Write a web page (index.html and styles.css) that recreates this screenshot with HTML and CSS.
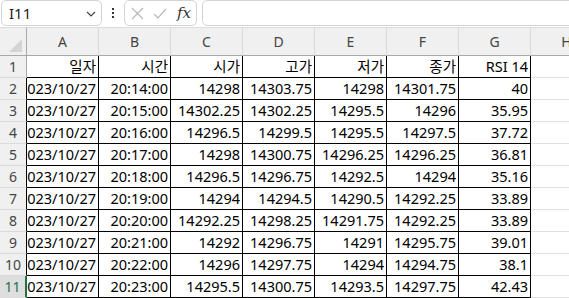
FILE: index.html
```html
<!DOCTYPE html>
<html lang="ko">
<head>
    <meta charset="UTF-8">
    <title>RSI 14</title>
    <link rel="stylesheet" href="styles.css">
</head>
<body>
    <!-- formula bar -->
    <div class="toolbar">
        <div class="namebox">
            <span>I11</span>
            <svg class="chevron" width="10" height="6" viewBox="0 0 10 6"><path d="M1 1l4 4 4-4" fill="none" stroke="#444" stroke-width="1.2"/></svg>
        </div>
        <div class="dots">
            <span></span><span></span><span></span>
        </div>
        <div class="fbuttons">
            <svg width="13" height="13" viewBox="0 0 13 13"><path d="M1 1l11 11M12 1L1 12" stroke="#b8b8b8" stroke-width="1.2"/></svg>
            <svg width="14" height="11" viewBox="0 0 14 11"><path d="M1 6l4 4 8-9" fill="none" stroke="#b8b8b8" stroke-width="1.2"/></svg>
            <span class="fx">fx</span>
        </div>
        <div class="formula"></div>
    </div>

    <div class="sheet">
        <div class="corner"><span class="tri"></span></div>
        <div class="col">A</div>
        <div class="col">B</div>
        <div class="col">C</div>
        <div class="col">D</div>
        <div class="col">E</div>
        <div class="col">F</div>
        <div class="col">G</div>
        <div class="col">H</div>

        <div class="row first">1</div>
        <div class="c">일자</div><div class="c">시간</div><div class="c">시가</div><div class="c">고가</div><div class="c">저가</div><div class="c">종가</div><div class="c">RSI 14</div><div class="e"></div>

        <div class="row">2</div>
        <div class="c">2023/10/27</div><div class="c">20:14:00</div><div class="c">14298</div><div class="c">14303.75</div><div class="c">14298</div><div class="c">14301.75</div><div class="c">40</div><div class="e"></div>

        <div class="row">3</div>
        <div class="c">2023/10/27</div><div class="c">20:15:00</div><div class="c">14302.25</div><div class="c">14302.25</div><div class="c">14295.5</div><div class="c">14296</div><div class="c">35.95</div><div class="e"></div>

        <div class="row">4</div>
        <div class="c">2023/10/27</div><div class="c">20:16:00</div><div class="c">14296.5</div><div class="c">14299.5</div><div class="c">14295.5</div><div class="c">14297.5</div><div class="c">37.72</div><div class="e"></div>

        <div class="row">5</div>
        <div class="c">2023/10/27</div><div class="c">20:17:00</div><div class="c">14298</div><div class="c">14300.75</div><div class="c">14296.25</div><div class="c">14296.25</div><div class="c">36.81</div><div class="e"></div>

        <div class="row">6</div>
        <div class="c">2023/10/27</div><div class="c">20:18:00</div><div class="c">14296.5</div><div class="c">14296.75</div><div class="c">14292.5</div><div class="c">14294</div><div class="c">35.16</div><div class="e"></div>

        <div class="row">7</div>
        <div class="c">2023/10/27</div><div class="c">20:19:00</div><div class="c">14294</div><div class="c">14294.5</div><div class="c">14290.5</div><div class="c">14292.25</div><div class="c">33.89</div><div class="e"></div>

        <div class="row">8</div>
        <div class="c">2023/10/27</div><div class="c">20:20:00</div><div class="c">14292.25</div><div class="c">14298.25</div><div class="c">14291.75</div><div class="c">14292.25</div><div class="c">33.89</div><div class="e"></div>

        <div class="row">9</div>
        <div class="c">2023/10/27</div><div class="c">20:21:00</div><div class="c">14292</div><div class="c">14296.75</div><div class="c">14291</div><div class="c">14295.75</div><div class="c">39.01</div><div class="e"></div>

        <div class="row">10</div>
        <div class="c">2023/10/27</div><div class="c">20:22:00</div><div class="c">14296</div><div class="c">14297.75</div><div class="c">14294</div><div class="c">14294.75</div><div class="c">38.1</div><div class="e"></div>

        <div class="row active">11</div>
        <div class="c">2023/10/27</div><div class="c">20:23:00</div><div class="c">14295.5</div><div class="c">14300.75</div><div class="c">14293.5</div><div class="c">14297.75</div><div class="c">42.43</div><div class="e"></div>
    </div>
</body>
</html>
```
FILE: styles.css
```css
/* Excel-like sheet */
body {
    margin: 0;
    background-color: #fff;
    font-family: 'Noto Sans', 'Noto Sans CJK KR', sans-serif;
    color: #000;
    overflow: hidden;
    width: 569px;
    height: 298px;
}

.toolbar {
    display: flex;
    align-items: stretch;
    height: 27px;
    box-sizing: border-box;
    padding: 0 0 1px 1px;
    background-color: #fff;
}

.namebox {
    width: 101px;
    box-sizing: border-box;
    border: 1px solid #d4d4d4;
    border-radius: 5px;
    display: flex;
    align-items: center;
    justify-content: space-between;
    padding: 0 5px 0 7px;
    font-size: 15px;
    color: #222;
}

.chevron {
    margin-top: 1px;
}

.dots {
    width: 22px;
    display: flex;
    flex-direction: column;
    align-items: center;
    justify-content: center;
    gap: 2px;
}

.dots span {
    width: 2px;
    height: 2px;
    background-color: #333;
}

.fbuttons {
    width: 73px;
    box-sizing: border-box;
    border: 1px solid #d4d4d4;
    border-radius: 5px;
    display: flex;
    align-items: center;
    gap: 9px;
    padding-left: 6px;
}

.fx {
    font-family: 'DejaVu Serif', serif;
    font-style: italic;
    font-size: 15px;
    color: #333;
    margin-left: 1px;
}

.formula {
    flex: 1;
    margin-left: 5px;
    margin-right: -10px;
    border: 1px solid #d4d4d4;
    border-radius: 5px;
}

.sheet {
    display: grid;
    grid-template-columns: 27px repeat(8, 72px);
    grid-template-rows: 29px;
    grid-auto-rows: 22px;
    font-size: 14.5px;
}

.sheet > div {
    box-sizing: border-box;
    border-right: 1px solid #000;
    border-bottom: 1px solid #000;
    display: flex;
    align-items: center;
    justify-content: flex-end;
    padding: 0 2px 0 0;
    overflow: hidden;
    white-space: nowrap;
    line-height: 21px;
}

.sheet > .corner,
.sheet > .col {
    background-color: #f0f0f0;
    border-top: 1px solid #dcdcdc;
    border-right: 1px solid #dadada;
    border-bottom: 1px solid #a8a8a8;
    justify-content: center;
    padding: 0;
    color: #444;
    font-size: 14px;
}

.sheet > .corner {
    position: relative;
    border-right: 1px solid #a8a8a8;
}

.tri {
    position: absolute;
    right: 4px;
    bottom: 3px;
    width: 0;
    height: 0;
    border-left: 13px solid transparent;
    border-bottom: 13px solid #d4d4d4;
}

.sheet > .row {
    background-color: #f0f0f0;
    border-bottom: 1px solid #dadada;
    justify-content: center;
    padding: 0;
    color: #444;
    font-size: 14px;
}

.sheet > .row.first {
    border-right-color: #a8a8a8;
}

.sheet > .row.active {
    background-color: #dedede;
    color: #217346;
    border-right: 2px solid #217346;
}

.sheet > .e {
    border-right: 1px solid #e1e1e1;
    border-bottom: 1px solid #e1e1e1;
}
```
